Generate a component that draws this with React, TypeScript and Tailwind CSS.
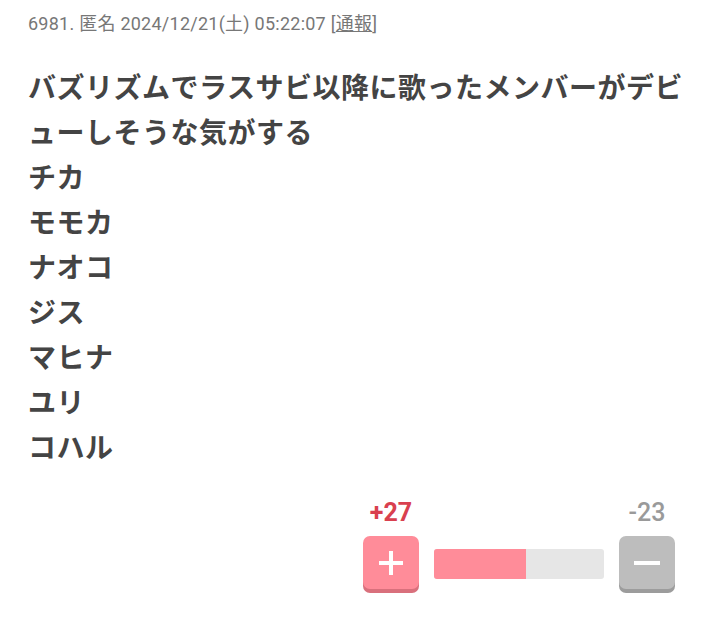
import React from "react";

export default function App() {
  const lines = ["チカ", "モモカ", "ナオコ", "ジス", "マヒナ", "ユリ", "コハル"];
  const font = { fontFamily: '"Noto Sans CJK JP", "Noto Sans", Roboto, sans-serif' };
  return (
    <div className="w-[720px] h-[624px] bg-white" style={font}>
      <div className="pl-[28px] pr-[28px] pt-[11px]">
        <div className="text-[18px] leading-[26px] text-[#777] tracking-[0.25px]" style={{ fontFamily: 'Roboto, "Noto Sans CJK JP", sans-serif' }}>
          6981. 匿名 2024/12/21(土) 05:22:07 <span>[<span className="underline">通報</span>]</span>
        </div>
        <div className="mt-[27px] text-[28px] leading-[45px] font-bold text-[#444] tracking-[0.5px]">
          <div>バズリズムでラスサビ以降に歌ったメンバーがデビューしそうな気がする</div>
          {lines.map((l) => (
            <div key={l}>{l}</div>
          ))}
        </div>
      </div>
      <div className="flex justify-end pr-[45px] mt-[30px]">
        <div className="flex flex-col">
          <div className="flex justify-between text-[25px] leading-[28px]" style={{ fontFamily: 'Roboto, sans-serif' }}>
            <div className="w-[56px] text-center text-[#d9404f] font-bold">+27</div>
            <div className="w-[56px] text-center text-[#9a9a9a] font-medium">-23</div>
          </div>
          <div className="flex items-start gap-[15px] mt-[9px]">
            <div className="w-[56px] h-[53px] rounded-[7px] bg-[#ff8c99] shadow-[0_4px_0_#d9707c] flex items-center justify-center">
              <svg width="28" height="28" viewBox="0 0 28 28">
                <path d="M14 2v24M2 14h24" stroke="white" strokeWidth="4" />
              </svg>
            </div>
            <div className="mt-[13px] w-[170px] h-[30px] rounded-[3px] bg-[#e6e6e6] overflow-hidden flex">
              <div className="h-full bg-[#ff8c99]" style={{ width: "54%" }} />
            </div>
            <div className="w-[56px] h-[53px] rounded-[7px] bg-[#bdbdbd] shadow-[0_4px_0_#9c9c9c] flex items-center justify-center">
              <svg width="28" height="28" viewBox="0 0 28 28">
                <path d="M1 14h26" stroke="white" strokeWidth="4" />
              </svg>
            </div>
          </div>
        </div>
      </div>
    </div>
  );
}
